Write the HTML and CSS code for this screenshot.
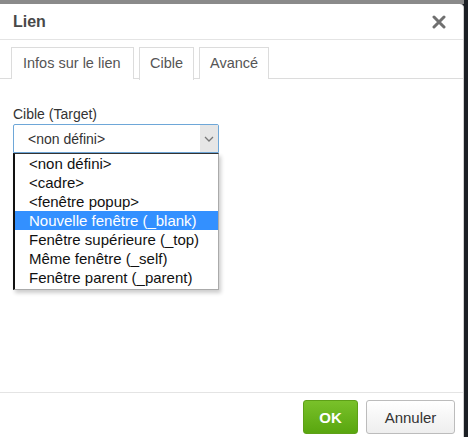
FILE: index.html
```html
<!DOCTYPE html>
<html>
<head>
<meta charset="utf-8">
<link rel="stylesheet" href="styles.css">
</head>
<body>
<div class="topstrip"></div>
<div class="dialog">
  <div class="titlebar">
    <span class="title">Lien</span>
    <svg class="close" width="14" height="14" viewBox="0 0 14 14"><path d="M2 2 L12 12 M12 2 L2 12" stroke="#707070" stroke-width="3" stroke-linecap="round"/></svg>
  </div>
  <div class="tabs">
    <div class="tab">Infos sur le lien</div>
    <div class="tab active">Cible</div>
    <div class="tab">Avancé</div>
  </div>
  <div class="body">
    <div class="label">Cible (Target)</div>
    <div class="select">
      <span>&lt;non défini&gt;</span>
      <span class="arrow"><svg width="10" height="6" viewBox="0 0 10 6"><path d="M1 1 L5 5 L9 1" fill="none" stroke="#777" stroke-width="1.3"/></svg></span>
    </div>
    <div class="list">
      <div class="opt">&lt;non défini&gt;</div>
      <div class="opt">&lt;cadre&gt;</div>
      <div class="opt">&lt;fenêtre popup&gt;</div>
      <div class="opt sel">Nouvelle fenêtre (_blank)</div>
      <div class="opt">Fenêtre supérieure (_top)</div>
      <div class="opt">Même fenêtre (_self)</div>
      <div class="opt">Fenêtre parent (_parent)</div>
    </div>
  </div>
  <div class="footer">
    <button class="btn ok">OK</button>
    <button class="btn cancel">Annuler</button>
  </div>
</div>
</body>
</html>
```
FILE: styles.css
```css
html, body { margin: 0; padding: 0; }
body {
  width: 468px; height: 437px; overflow: hidden;
  background: #1b1f24;
  font-family: "Liberation Sans", Arial, sans-serif;
}
.topstrip { height: 4px; background: #8a8a8a; width: 464px; }
.dialog {
  width: 464px; height: 433px; background: #fff;
  border-top-right-radius: 4px;
  display: flex; flex-direction: column;
  box-sizing: border-box;
  border-right: 1px solid #d0d0d0;
}
.titlebar {
  height: 36px; box-sizing: border-box;
  border-bottom: 1px solid #e4e4e4;
  display: flex; align-items: center; justify-content: space-between;
  padding: 0 17px 0 13px;
}
.title { font-weight: bold; font-size: 16px; color: #484848; }
.close { display: block; }
.tabs {
  display: flex; gap: 5px; padding: 7px 0 0 11px;
  border-bottom: 1px solid #dcdcdc; height: 39px; box-sizing: border-box;
}
.tab {
  border: 1px solid #dcdcdc; border-bottom: none;
  padding: 0 10px; height: 32px; line-height: 31px;
  font-size: 14.5px; color: #555; background: #fff;
  box-sizing: border-box;
}
.tab:first-child { width: 123px; padding: 0 0 0 11px; }
.tab.active { height: 33px; margin-bottom: -1px; }
.body { flex: 1; padding: 27px 13px 0; }
.label { font-size: 14px; color: #333; line-height: 16px; }
.select {
  margin-top: 2px;
  width: 206px; height: 29px; box-sizing: border-box;
  border: 1px solid #6ea7d8; border-radius: 2px 2px 0 0;
  display: flex; align-items: center; justify-content: space-between;
  font-size: 14px; color: #333; padding-left: 14px;
  background: #fff;
}
.arrow {
  width: 18px; height: 27px; background: #e6e6e6;
  display: flex; align-items: center; justify-content: center;
}
.list {
  width: 206px; box-sizing: border-box;
  border: 1px solid #aaa; border-left: 2px solid #111; border-top: 1px solid #333;
  box-shadow: 2px 3px 4px rgba(0,0,0,0.2);
  padding: 0 0 2px;
  background: #fff;
}
.opt { font-size: 15px; line-height: 19px; color: #111; padding-left: 14px; white-space: nowrap; }
.opt.sel { background: #3390ff; color: #fff; }
.footer {
  height: 45px; border-top: 1px solid #e4e4e4;
  display: flex; justify-content: flex-end; align-items: flex-start;
  gap: 8px; padding: 7px 8px 0 0; box-sizing: border-box;
}
.btn {
  height: 34px; font-family: "Liberation Sans", Arial, sans-serif;
  font-size: 14px; border-radius: 3px; padding: 0;
}
.ok {
  width: 55px; background: linear-gradient(#79c12a, #59a60f);
  border: 1px solid #5ea018; color: #fff; font-weight: bold; font-size: 15px;
}
.cancel {
  width: 89px; background: linear-gradient(#fff, #eee);
  border: 1px solid #bcbcbc; color: #333; font-size: 15px;
}
```
